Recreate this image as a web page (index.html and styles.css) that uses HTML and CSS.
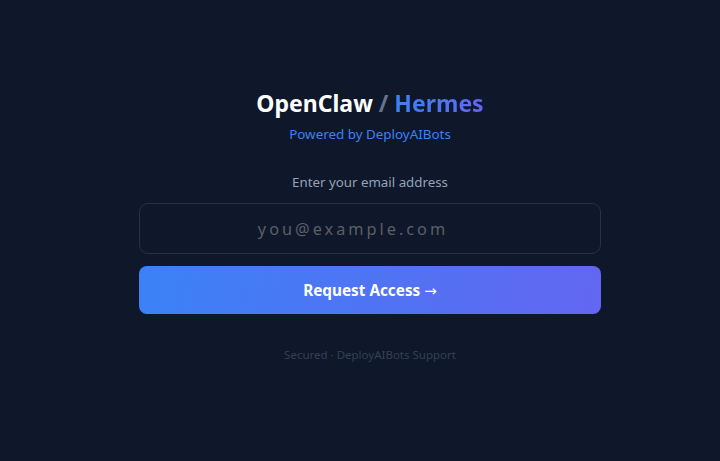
FILE: index.html
```html
<!DOCTYPE html>
<html lang="en">
<head>
<meta charset="utf-8">
<title>OpenClaw / Hermes</title>
<link rel="stylesheet" href="styles.css">
</head>
<body>
<main class="page">
  <section class="card">
    <h1 class="title"><span class="brand">OpenClaw</span> <span class="slash">/</span> <span class="accent">Hermes</span></h1>
    <p class="subtitle">Powered by DeployAIBots</p>
    <form class="form">
      <label class="label" for="email">Enter your email address</label>
      <input class="input" id="email" type="email" placeholder="you@example.com">
      <button class="button" type="button">Request Access <span class="arrow">→</span></button>
    </form>
    <p class="footer">Secured · DeployAIBots Support</p>
  </section>
</main>
</body>
</html>
```
FILE: styles.css
```css
html, body {
  margin: 0;
  padding: 0;
  height: 100%;
  background: #0f172a;
}
body {
  font-family: "Noto Sans", "Open Sans", sans-serif;
}
.page {
  min-height: 100%;
  display: flex;
  justify-content: center;
  padding-left: 20px;
  box-sizing: border-box;
}
.card {
  width: 462px;
  padding-top: 86px;
  display: flex;
  flex-direction: column;
  align-items: center;
}
.title {
  margin: 0;
  font-size: 23px;
  font-weight: 700;
  line-height: 34px;
  color: #ffffff;
}
.slash {
  color: #64748b;
}
.accent {
  background: linear-gradient(90deg, #3b82f6, #6366f1);
  -webkit-background-clip: text;
  background-clip: text;
  color: transparent;
}
.subtitle {
  margin: 4px 0 0;
  font-size: 13.4px;
  line-height: 20px;
  color: #3b82f6;
}
.form {
  width: 100%;
  margin-top: 28px;
  display: flex;
  flex-direction: column;
  align-items: center;
}
.label {
  font-size: 13.3px;
  line-height: 20px;
  color: #94a3b8;
  margin-bottom: 11px;
}
.input {
  width: 100%;
  height: 51px;
  box-sizing: border-box;
  border: 1px solid #273244;
  border-radius: 9px;
  background: #0f172a;
  text-align: center;
  padding: 0 34px 0 0;
  font-family: "Noto Sans", sans-serif;
  font-size: 16.3px;
  letter-spacing: 3px;
  color: #e2e8f0;
  outline: none;
}
.input::placeholder {
  color: #5b5f66;
}
.button {
  width: 100%;
  height: 48px;
  margin-top: 12px;
  border: none;
  border-radius: 8px;
  background: linear-gradient(100deg, #3b82f6, #6366f1);
  color: #ffffff;
  font-family: "Noto Sans", sans-serif;
  font-size: 15.3px;
  font-weight: 700;
}
.arrow {
  font-family: "DejaVu Sans", sans-serif;
  font-weight: 400;
  font-size: 15px;
}
.footer {
  margin: 32px 0 0;
  font-size: 11.5px;
  line-height: 18px;
  color: #334155;
}
```
